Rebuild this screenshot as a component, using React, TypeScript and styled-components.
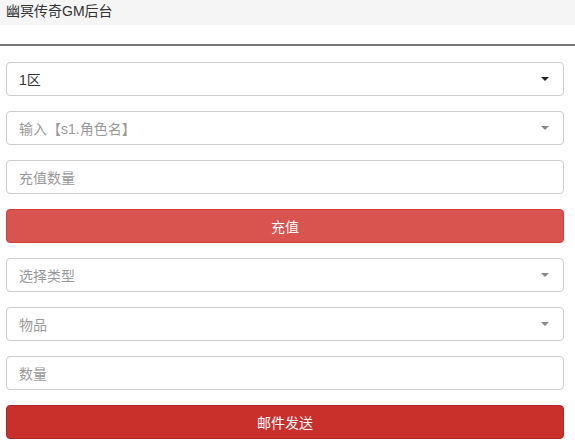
import styled, { createGlobalStyle } from "styled-components";

const GlobalStyle = createGlobalStyle`
  html, body {
    margin: 0;
    padding: 0;
    background: #fff;
    font-family: "Liberation Sans", "Noto Sans CJK SC", sans-serif;
    font-size: 14px;
    color: #333;
  }
`;

const Page = styled.div`
  width: 575px;
`;

const TopBar = styled.div`
  background: #f5f5f5;
  height: 25px;
  padding: 2px 6px 0;
  box-sizing: border-box;
  font-size: 14px;
  line-height: 18px;
  color: #333;
`;

const Divider = styled.div`
  margin-top: 19px;
  height: 2px;
  background: #777;
`;

const Form = styled.form`
  display: flex;
  flex-direction: column;
  gap: 15px;
  padding: 16px 11px 0 6px;
`;

const Field = styled.div<{ $muted?: boolean }>`
  height: 34px;
  box-sizing: border-box;
  border: 1px solid #ccc;
  border-radius: 4px;
  padding: 0 12px;
  display: flex;
  align-items: center;
  justify-content: space-between;
  color: ${(p) => (p.$muted ? "#999" : "#333")};
  font-size: 14px;
  background: #fff;
`;

const Caret = styled.span<{ $muted?: boolean }>`
  width: 0;
  height: 0;
  border-left: 4px solid transparent;
  border-right: 4px solid transparent;
  border-top: 4px solid ${(p) => (p.$muted ? "#888" : "#222")};
  margin-right: 2px;
`;

const Button = styled.button<{ $dark?: boolean }>`
  height: 34px;
  width: 100%;
  border-radius: 4px;
  border: 1px solid ${(p) => (p.$dark ? "#ac2925" : "#d43f3a")};
  background: ${(p) => (p.$dark ? "#c9302c" : "#d9534f")};
  color: #fff;
  font-family: inherit;
  font-size: 14px;
  cursor: pointer;
`;

const Select = ({ text, muted }: { text: string; muted?: boolean }) => (
  <Field $muted={muted}>
    <span>{text}</span>
    <Caret $muted={muted} />
  </Field>
);

const App = () => {
  return (
    <Page>
      <GlobalStyle />
      <TopBar>幽冥传奇GM后台</TopBar>
      <Divider />
      <Form onSubmit={(e) => e.preventDefault()}>
        <Select text="1区" />
        <Select text="输入【s1.角色名】" muted />
        <Field $muted>充值数量</Field>
        <Button type="button">充值</Button>
        <Select text="选择类型" muted />
        <Select text="物品" muted />
        <Field $muted>数量</Field>
        <Button type="button" $dark>
          邮件发送
        </Button>
      </Form>
    </Page>
  );
};

export default App;
